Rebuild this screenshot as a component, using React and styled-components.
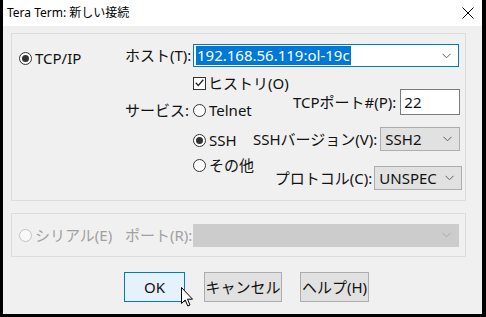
import React from 'react';
import styled, { createGlobalStyle } from 'styled-components';

const Global = createGlobalStyle`
  html, body { margin: 0; padding: 0; background: #000; }
  body {
    width: 486px; height: 317px; overflow: hidden;
    font-family: "Noto Sans", "Noto Sans CJK JP", sans-serif;
  }
  * { box-sizing: border-box; }
`;

const Window = styled.div`
  position: relative;
  margin-left: 3px;
  width: 479px;
  height: 314px;
  background: #f0f0f0;
  display: flex;
  flex-direction: column;
`;

const TitleBar = styled.div`
  height: 26px;
  flex: none;
  background: #fff;
  display: flex;
  align-items: center;
  justify-content: space-between;
  padding: 0 8px 0 4px;
  font-size: 12px;
  color: #000;
  line-height: 1;
`;

const Body = styled.div`
  display: flex;
  flex-direction: column;
  padding: 7px 16px 0 8px;
  font-size: 15px;
  line-height: 1;
  color: #111;
`;

const GroupBox = styled.div`
  border: 1px solid #dcdcdc;
  height: ${p => p.$h}px;
  margin-top: ${p => p.$mt || 0}px;
  display: flex;
  align-items: ${p => p.$align || 'flex-start'};
  padding: ${p => p.$pad || '0'};
`;

const LeftCol = styled.div`
  width: 106px;
  flex: none;
  padding-top: ${p => p.$pt || 0}px;
`;

const MainCol = styled.div`
  width: 334px;
  display: flex;
  flex-direction: column;
`;

const Row = styled.div`
  display: flex;
  align-items: center;
  height: ${p => p.$h || 23}px;
  margin-top: ${p => p.$mt || 0}px;
  white-space: nowrap;
`;

const Label = styled.span`
  width: ${p => p.$w ? p.$w + 'px' : 'auto'};
  flex: none;
  color: ${p => p.$disabled ? '#a0a0a0' : '#111'};
  margin-right: ${p => p.$mr || 0}px;
  white-space: nowrap;
`;

const Lower = styled.div`
  display: flex;
`;

const ServiceCol = styled.div`
  width: 68px;
  flex: none;
  display: flex;
  flex-direction: column;
`;

const OptionsCol = styled.div`
  width: 60px;
  flex: none;
  display: flex;
  flex-direction: column;
`;

const RightCol = styled.div`
  flex: 1;
  display: flex;
  flex-direction: column;
  align-items: flex-end;
`;

const Option = styled.label`
  display: flex;
  align-items: center;
  height: 20px;
  margin-top: ${p => p.$mt || 0}px;
  white-space: nowrap;
  color: ${p => p.$disabled ? '#a0a0a0' : '#111'};
`;

const RadioDot = styled.span`
  width: 13px;
  height: 13px;
  flex: none;
  border-radius: 50%;
  border: 1px solid ${p => p.$disabled ? '#c2c2c2' : '#333'};
  background: ${p => p.$disabled ? '#f8f8f8' : '#fff'};
  margin-right: 3px;
  position: relative;
  &::after {
    content: '';
    display: ${p => p.$checked ? 'block' : 'none'};
    position: absolute;
    left: 2px; top: 2px;
    width: 7px; height: 7px;
    border-radius: 50%;
    background: #333;
  }
`;

const CheckBox = styled.span`
  width: 13px;
  height: 13px;
  flex: none;
  border: 1px solid #333;
  background: #fff;
  margin-right: 2px;
  display: flex;
  align-items: center;
  justify-content: center;
`;

const Combo = styled.div`
  width: ${p => p.$w}px;
  height: ${p => p.$h || 23}px;
  flex: none;
  margin-right: ${p => p.$mr || 0}px;
  border: 1px solid ${p => p.$focus ? '#0078d7' : p.$disabled ? '#cccccc' : '#adadad'};
  background: ${p => p.$focus ? '#fff' : p.$disabled ? '#cccccc' : '#e1e1e1'};
  display: flex;
  align-items: center;
  justify-content: space-between;
  padding: 0 7px 0 ${p => p.$focus ? 2 : 4}px;
`;

const Selected = styled.span`
  background: #0078d7;
  color: #fff;
  height: 19px;
  display: flex;
  align-items: center;
  padding: 0 1px;
`;

const TextInput = styled.div`
  width: 60px;
  height: 26px;
  flex: none;
  border: 1px solid #7a7a7a;
  background: #fff;
  display: flex;
  align-items: center;
  padding-left: 3px;
`;

const ButtonRow = styled.div`
  display: flex;
  gap: 18px;
  margin-top: 15px;
  padding-left: 113px;
`;

const Button = styled.div`
  width: ${p => p.$w}px;
  height: 30px;
  margin-left: ${p => p.$ml || 0}px;
  border: 1px solid ${p => p.$default ? '#0078d7' : '#adadad'};
  background: ${p => p.$default ? '#e5f1fb' : '#e1e1e1'};
  display: flex;
  align-items: center;
  justify-content: center;
  white-space: nowrap;
`;

const Cursor = styled.svg`
  position: absolute;
  left: 178px;
  top: 287px;
`;

const Chevron = ({ color = '#606060' }) => (
  <svg width="9" height="6" viewBox="0 0 9 6">
    <polyline points="0.5,0.8 4.5,4.8 8.5,0.8" fill="none" stroke={color} strokeWidth="1" />
  </svg>
);

export default function App() {
  return (
    <>
      <Global />
      <Window>
        <TitleBar>
          <span>Tera Term: 新しい接続</span>
          <svg width="12" height="12" viewBox="0 0 12 12">
            <path d="M0.5 0.5 L11.5 11.5 M11.5 0.5 L0.5 11.5" stroke="#000" strokeWidth="1" fill="none" />
          </svg>
        </TitleBar>
        <Body>
          <GroupBox $h={168} $pad="10px 0 0 7px">
            <LeftCol $pt={3}>
              <Row>
                <RadioDot $checked />
                <span>TCP/IP</span>
              </Row>
            </LeftCol>
            <MainCol>
              <Row>
                <Label $w={68}>ホスト(T):</Label>
                <Combo $w={266} $focus>
                  <Selected>192.168.56.119:ol-19c</Selected>
                  <Chevron />
                </Combo>
              </Row>
              <Lower>
                <ServiceCol>
                  <Option $mt={33}>サービス:</Option>
                </ServiceCol>
                <OptionsCol>
                  <Option $mt={6}>
                    <CheckBox>
                      <svg width="9" height="8" viewBox="0 0 9 8">
                        <polyline points="0.8,3.8 3.3,6.5 8.3,0.8" fill="none" stroke="#222" strokeWidth="1.3" />
                      </svg>
                    </CheckBox>
                    ヒストリ(O)
                  </Option>
                  <Option $mt={7}><RadioDot />Telnet</Option>
                  <Option $mt={10}><RadioDot $checked />SSH</Option>
                  <Option $mt={5}><RadioDot />その他</Option>
                </OptionsCol>
                <RightCol>
                  <Row $h={26} $mt={22}>
                    <Label $mr={4}>TCPポート#(P):</Label>
                    <TextInput>22</TextInput>
                  </Row>
                  <Row $h={24} $mt={12}>
                    <Label $mr={3}>SSHバージョン(V):</Label>
                    <Combo $w={80} $h={24}>
                      <span>SSH2</span>
                      <Chevron />
                    </Combo>
                  </Row>
                  <Row $h={24} $mt={15}>
                    <Label $mr={2}>プロトコル(C):</Label>
                    <Combo $w={88} $h={24} $mr={-2}>
                      <span>UNSPEC</span>
                      <Chevron />
                    </Combo>
                  </Row>
                </RightCol>
              </Lower>
            </MainCol>
          </GroupBox>
          <GroupBox $h={44} $mt={12} $align="center" $pad="0 0 0 7px">
            <LeftCol>
              <Option $disabled>
                <RadioDot $disabled />
                シリアル(E)
              </Option>
            </LeftCol>
            <Row>
              <Label $w={68} $disabled>ポート(R):</Label>
              <Combo $w={266} $disabled>
                <span />
                <Chevron color="#a8a8a8" />
              </Combo>
            </Row>
          </GroupBox>
          <ButtonRow>
            <Button $w={61} $default>OK</Button>
            <Button $w={78} $ml={1}>キャンセル</Button>
            <Button $w={69}>ヘルプ(H)</Button>
          </ButtonRow>
        </Body>
        <Cursor width="13" height="20" viewBox="0 0 13 20">
          <path d="M0.5 0.5 L0.5 16.5 L4.2 13 L6.8 19 L9 18 L6.5 12.2 L11.5 12.2 Z" fill="#fff" stroke="#000" strokeWidth="1" strokeLinejoin="miter" />
        </Cursor>
      </Window>
    </>
  );
}
